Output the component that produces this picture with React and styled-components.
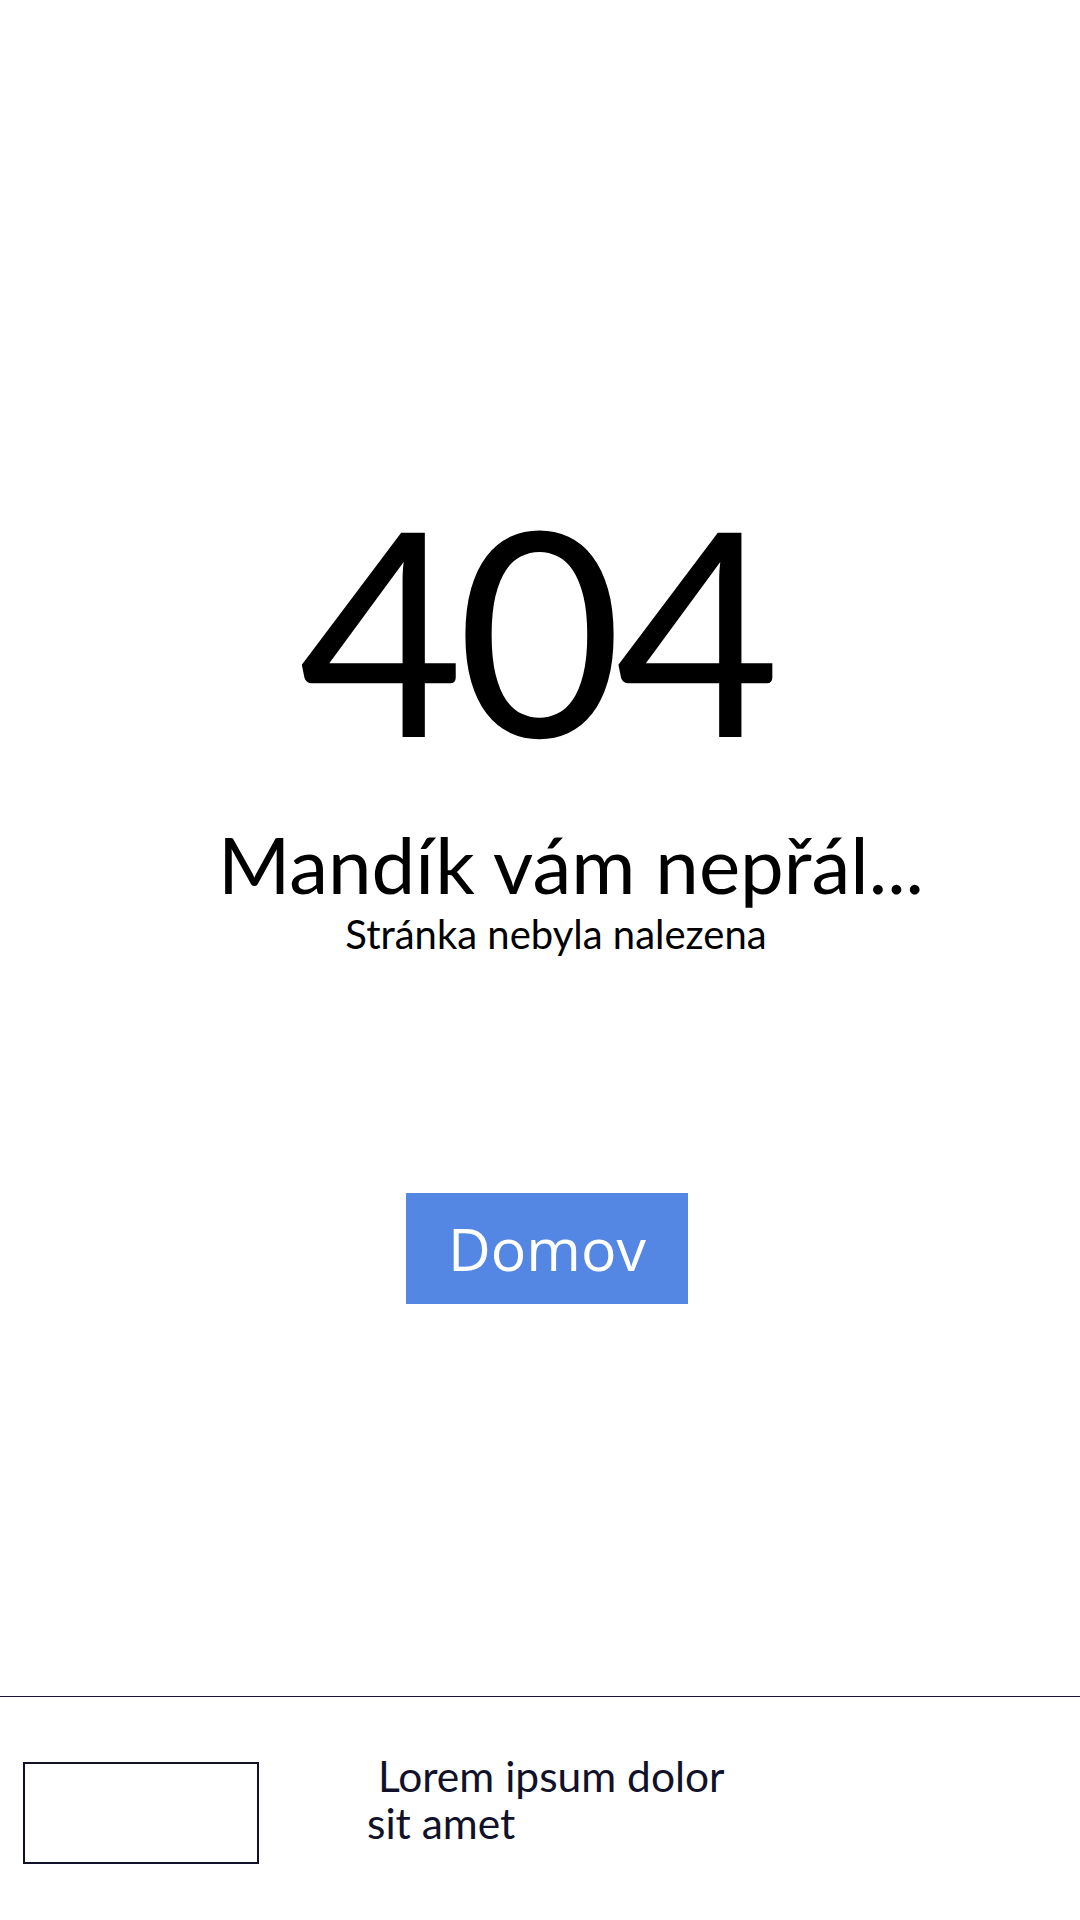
import React from 'react';
import styled, { createGlobalStyle } from 'styled-components';

const GlobalStyle = createGlobalStyle`
  html, body {
    margin: 0;
    padding: 0;
    background: #ffffff;
  }
  body {
    font-family: Lato, "Noto Sans", sans-serif;
  }
`;

const Page = styled.div`
  width: 1080px;
  height: 1920px;
  display: flex;
  flex-direction: column;
  background: #ffffff;
`;

const Main = styled.main`
  flex: 1;
  display: flex;
  flex-direction: column;
  align-items: center;
  padding-top: 485px;
`;

const ErrorCode = styled.h1`
  margin: 0;
  font-family: Lato, sans-serif;
  font-weight: 400;
  font-size: 285px;
  line-height: 1;
  color: #000000;
  letter-spacing: -7px;
  transform: translateX(-4px);
`;

const Title = styled.h2`
  margin: 52px 0 0;
  font-family: Lato, sans-serif;
  font-weight: 400;
  font-size: 78px;
  line-height: 1.1;
  color: #000000;
  transform: translateX(${(p) => p.$shift || 0}px);
`;

const Subtitle = styled.p`
  margin: 2px 0 0;
  font-family: Lato, sans-serif;
  font-size: 40px;
  line-height: 1.2;
  color: #000000;
  transform: translateX(${(p) => p.$shift || 0}px);
`;

const HomeButton = styled.a`
  margin-top: 235px;
  width: 282px;
  height: 111px;
  display: flex;
  align-items: center;
  justify-content: center;
  background: #5486e3;
  color: #ffffff;
  font-family: "Open Sans", sans-serif;
  font-size: 59px;
  text-decoration: none;
  transform: translateX(7px);
`;

const Footer = styled.footer`
  height: 224px;
  border-top: 1px solid #15143a;
  display: flex;
  align-items: flex-start;
  padding: 65px 0 0 23px;
  box-sizing: border-box;
`;

const LogoBox = styled.div`
  width: 236px;
  height: 102px;
  border: 2px solid #11112a;
  box-sizing: border-box;
`;

const FooterText = styled.p`
  margin: -10px 0 0 108px;
  font-family: Lato, sans-serif;
  font-size: 42.5px;
  line-height: 47px;
  color: #11112a;
  white-space: pre;
`;

export default function App() {
  return (
    <>
      <GlobalStyle />
      <Page>
        <Main>
          <ErrorCode>404</ErrorCode>
          <Title $shift={31}>Mandík vám nepřál...</Title>
          <Subtitle $shift={16}>Stránka nebyla nalezena</Subtitle>
          <HomeButton href="#">Domov</HomeButton>
        </Main>
        <Footer>
          <LogoBox />
          <FooterText>{' Lorem ipsum dolor\nsit amet'}</FooterText>
        </Footer>
      </Page>
    </>
  );
}
